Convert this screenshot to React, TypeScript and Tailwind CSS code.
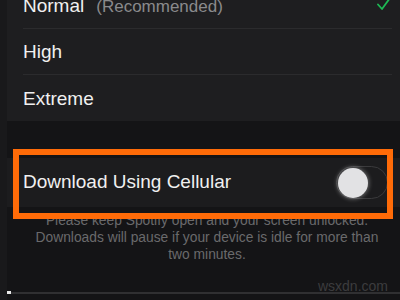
import React from 'react';

const rows = [
  { label: 'Normal', note: '(Recommended)', checked: true },
  { label: 'High' },
  { label: 'Extreme' },
];

export default function App() {
  return (
    <div className="relative w-[400px] h-[300px] overflow-hidden bg-[#141416] flex font-['Liberation_Sans',Arial,sans-serif]">
      <div className="w-[7px] shrink-0 bg-[#19191b]" />
      <div className="flex-1 flex flex-col">
        <div className="bg-[#1e1e20] -mt-[17px]">
          {rows.map((row, i) => (
            <div key={row.label} className="h-[46px] pl-[16px] pr-[8px]">
              <div className={`h-full pt-[2px] flex items-center justify-between ${i < rows.length - 1 ? 'border-b border-[#2b2b2d]' : ''}`}>
                <div className="text-[19px] text-[#f0f0f0] flex items-center">
                  {row.label}
                  {row.note && <span className="ml-[12px] text-[17px] text-[#8a8a8c]">{row.note}</span>}
                </div>
                {row.checked && (
                  <svg width="16" height="14" viewBox="0 0 16 14" className="-mt-[6px]">
                    <path d="M2 7.5 L6 12 L14 1" fill="none" stroke="#1db954" strokeWidth="1.8" strokeLinecap="round" strokeLinejoin="round" />
                  </svg>
                )}
              </div>
            </div>
          ))}
        </div>

        <div className="h-[37px]" />

        <div className="h-[49px] bg-[#1c1c1e] flex items-center justify-between pl-[16px] pr-[12px]">
          <span className="text-[19px] text-[#f0f0f0]">Download Using Cellular</span>
          <div className="w-[52px] h-[33px] rounded-full border-[1.5px] border-[#3a3a3c] flex items-center pl-[1px]">
            <div className="w-[30px] h-[30px] rounded-full bg-[#e2e2e4] shadow-[0_0_4px_1px_rgba(255,255,255,0.35)]" />
          </div>
        </div>

        <div className="pt-[5px] pl-[7px] text-center text-[13.8px] leading-[17px] text-[#6a6a6c]">
          <div>Please keep Spotify open and your screen unlocked.</div>
          <div>Downloads will pause if your device is idle for more than</div>
          <div>two minutes.</div>
        </div>

        <div className="mt-auto mb-[6px] flex items-center">
          <div className="w-[4px] h-[3px] bg-[#e8e8e8]" />
          <div className="flex-1 h-[2px] bg-[#303032]" />
        </div>
      </div>

      <div className="absolute right-[12px] bottom-[3px] text-[14px] text-[#3c3c3e]">wsxdn.com</div>
      <div className="absolute left-[13px] top-[149px] w-[380px] h-[70px] border-[6px] border-[#ff6b08]" />
    </div>
  );
}
